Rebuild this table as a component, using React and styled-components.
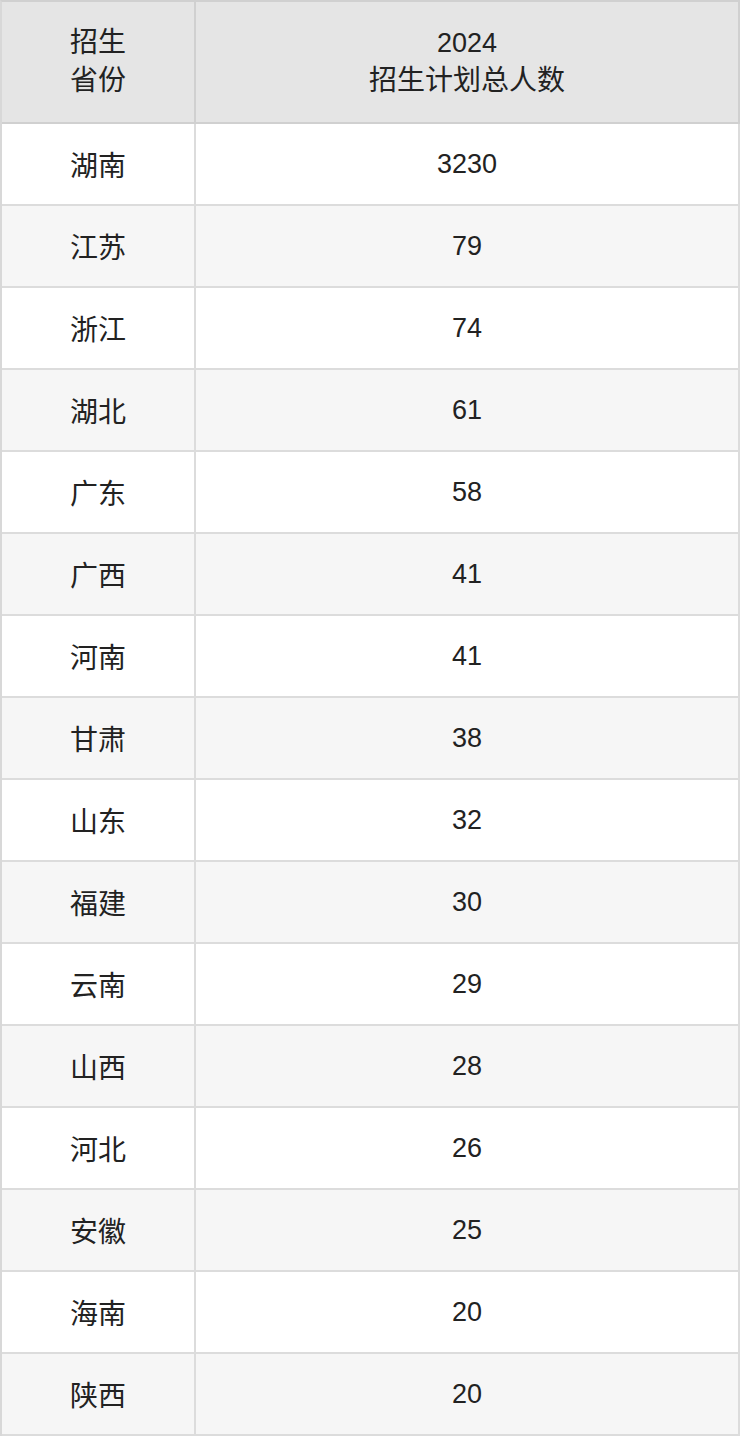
import styled, { createGlobalStyle } from "styled-components";

const rows = [
  ["湖南", "3230"],
  ["江苏", "79"],
  ["浙江", "74"],
  ["湖北", "61"],
  ["广东", "58"],
  ["广西", "41"],
  ["河南", "41"],
  ["甘肃", "38"],
  ["山东", "32"],
  ["福建", "30"],
  ["云南", "29"],
  ["山西", "28"],
  ["河北", "26"],
  ["安徽", "25"],
  ["海南", "20"],
  ["陕西", "20"],
];

export default function App() {
  return (
    <>
      <GlobalStyle />
      <StyledTable>
        <thead>
          <tr>
            <StyledTh $narrow>
              <Cjk>招生</Cjk>
              <br />
              <Cjk>省份</Cjk>
            </StyledTh>
            <StyledTh>
              2024
              <br />
              <Cjk>招生计划总人数</Cjk>
            </StyledTh>
          </tr>
        </thead>
        <tbody>
          {rows.map(([province, total], i) => (
            <StyledTr key={province + i} $striped={i % 2 === 1}>
              <StyledTd $narrow>{province}</StyledTd>
              <StyledTd>{total}</StyledTd>
            </StyledTr>
          ))}
        </tbody>
      </StyledTable>
    </>
  );
}

const GlobalStyle = createGlobalStyle`
  body {
    margin: 0;
    background: #fff;
    font-family: "Liberation Sans", Arial, "Noto Sans CJK SC", sans-serif;
  }
`;

const StyledTable = styled.table`
  width: 740px;
  border-collapse: separate;
  border-spacing: 0;
  border-top: 2px solid #d0d0d0;
  border-left: 2px solid #d8d8d8;
  color: #222;
  font-size: 27px;
  table-layout: fixed;
`;

const Cjk = styled.span`
  font-size: 28px;
`;

const StyledTh = styled.th`
  box-sizing: border-box;
  width: ${(p) => (p.$narrow ? "194px" : "auto")};
  height: 122px;
  padding: 0 0 1px;
  background: #e5e5e5;
  border-right: 2px solid #d0d0d0;
  border-bottom: 2px solid #d0d0d0;
  font-weight: normal;
  line-height: 38px;
  text-align: center;
  vertical-align: middle;
`;

const StyledTr = styled.tr`
  background: ${(p) => (p.$striped ? "#f6f6f6" : "#fff")};
`;

const StyledTd = styled.td`
  box-sizing: border-box;
  height: 82px;
  padding: 0;
  border-right: 2px solid #dcdcdc;
  border-bottom: 2px solid #dcdcdc;
  font-size: ${(p) => (p.$narrow ? "28px" : "27px")};
  text-align: center;
  vertical-align: middle;
`;
